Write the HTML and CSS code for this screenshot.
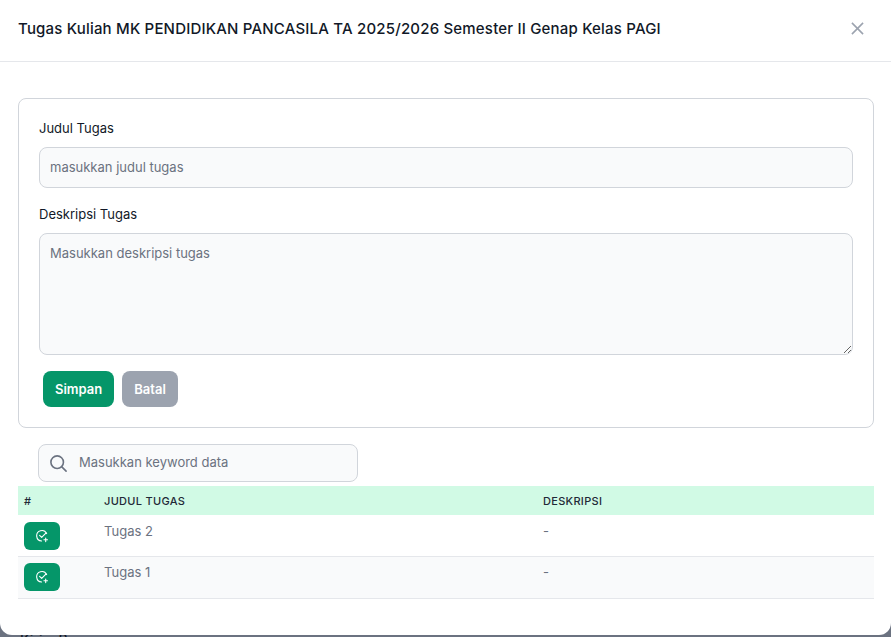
FILE: index.html
```html
<!DOCTYPE html>
<html lang="id">
<head>
    <meta charset="UTF-8">
    <title>Tugas Kuliah</title>
    <link rel="stylesheet" href="styles.css">
</head>
<body>

<div class="modal">
    <div class="modal-header">
        <h3>Tugas Kuliah MK PENDIDIKAN PANCASILA TA 2025/2026 Semester II Genap Kelas PAGI</h3>
        <svg class="close-icon" width="13" height="13" viewBox="0 0 14 14" fill="none" stroke="#9ca3af" stroke-width="1.7"><path d="M1 1l12 12M13 1L1 13"/></svg>
    </div>

    <div class="modal-body">
        <form class="task-form">
            <label class="field-label">Judul Tugas</label>
            <input class="field" type="text" placeholder="masukkan judul tugas">
            <label class="field-label label-second">Deskripsi Tugas</label>
            <textarea class="field field-area" placeholder="Masukkan deskripsi tugas"></textarea>
            <div class="form-actions">
                <button type="button" class="btn btn-save">Simpan</button>
                <button type="button" class="btn btn-cancel">Batal</button>
            </div>
        </form>

        <div class="search-box">
            <svg width="19" height="19" viewBox="0 0 20 20" fill="none" stroke="#6b7280" stroke-width="1.7"><circle cx="8.6" cy="8.6" r="6.6"/><path d="M13.5 13.5L18 18" stroke-linecap="round"/></svg>
            <input class="search-input" type="text" placeholder="Masukkan keyword data">
        </div>

        <table class="task-table">
            <thead>
                <tr>
                    <th class="col-action">#</th>
                    <th class="col-title">Judul Tugas</th>
                    <th>Deskripsi</th>
                </tr>
            </thead>
            <tbody>
                <tr>
                    <td class="cell-action"><button type="button" class="btn-row"><svg width="14" height="14" viewBox="0 0 14 14" fill="none" stroke="#fff" stroke-width="1.1" stroke-linecap="round" stroke-linejoin="round"><path d="M11.6 4.6A5.2 5.2 0 1 0 6.6 12"/><path d="M4.6 6.3l2.1 2.1 4.4-4.6"/><path d="M10.7 9v3.6M8.9 10.8h3.6"/></svg></button></td>
                    <td class="cell-text">Tugas 2</td>
                    <td class="cell-text">-</td>
                </tr>
                <tr class="row-alt">
                    <td class="cell-action"><button type="button" class="btn-row"><svg width="14" height="14" viewBox="0 0 14 14" fill="none" stroke="#fff" stroke-width="1.1" stroke-linecap="round" stroke-linejoin="round"><path d="M11.6 4.6A5.2 5.2 0 1 0 6.6 12"/><path d="M4.6 6.3l2.1 2.1 4.4-4.6"/><path d="M10.7 9v3.6M8.9 10.8h3.6"/></svg></button></td>
                    <td class="cell-text">Tugas 1</td>
                    <td class="cell-text">-</td>
                </tr>
            </tbody>
        </table>
    </div>
</div>

<div class="page-behind">Kirim Barang</div>

</body>
</html>
```

FILE: styles.css
```css
html, body {
    height: 100%;
}
body {
    font-family: 'Inter', sans-serif;
    background-color: #6b7280;
    margin: 0;
    overflow: hidden;
    color: #111827;
}
.modal {
    height: 635px;
    box-sizing: border-box;
    background-color: #fff;
    border-radius: 0 0 12px 12px;
    position: relative;
    z-index: 1;
}
.modal-header {
    height: 62px;
    box-sizing: border-box;
    display: flex;
    align-items: center;
    justify-content: space-between;
    padding: 0 27px 5px 18px;
    border-bottom: 1px solid #e5e7eb;
}
.modal-header h3 {
    margin: 0;
    font-size: 15px;
    font-weight: 500;
    letter-spacing: 0.19px;
}
.modal-body {
    padding: 36px 17px 0 18px;
}
.task-form {
    display: block;
    height: 330px;
    box-sizing: border-box;
    padding: 20px 20px 0;
    border: 1px solid #d1d5db;
    border-radius: 8px;
}
.field-label {
    display: block;
    font-size: 13px;
    line-height: 18px;
    margin-bottom: 10px;
}
.label-second {
    margin-top: 17px;
}
.field {
    display: block;
    width: 100%;
    height: 41px;
    box-sizing: border-box;
    padding: 0 10px 2px;
    font-family: 'Inter', sans-serif;
    font-size: 13px;
    color: #111827;
    background-color: #f9fafb;
    border: 1px solid #d1d5db;
    border-radius: 8px;
    outline: none;
}
.field-area {
    height: 122px;
    padding: 11px 10px;
    resize: vertical;
}
.field::placeholder,
.search-input::placeholder {
    color: #6b7280;
    opacity: 1;
}
.form-actions {
    display: flex;
    gap: 8px;
    margin: 16px 0 0 4px;
}
.btn {
    height: 36px;
    padding: 0 12px;
    border: none;
    border-radius: 8px;
    color: #fff;
    font-family: 'Inter', sans-serif;
    font-size: 13px;
    font-weight: 600;
}
.btn-save {
    background-color: #059669;
}
.btn-cancel {
    background-color: #9ca3af;
}
.search-box {
    display: flex;
    align-items: center;
    gap: 11px;
    width: 320px;
    height: 38px;
    box-sizing: border-box;
    margin: 16px 0 4px 20px;
    padding: 0 10px;
    background-color: #f9fafb;
    border: 1px solid #d1d5db;
    border-radius: 8px;
}
.search-input {
    flex: 1;
    min-width: 0;
    padding: 0 0 2px;
    border: none;
    outline: none;
    background: transparent;
    font-family: 'Inter', sans-serif;
    font-size: 13px;
}
.task-table {
    width: 100%;
    border-collapse: collapse;
    table-layout: fixed;
    font-size: 13px;
}
.task-table th {
    height: 29px;
    padding: 0 6px;
    text-align: left;
    font-size: 11px;
    font-weight: 500;
    letter-spacing: 0.3px;
    text-transform: uppercase;
    color: #1f2937;
    background-color: #d1fae5;
}
.col-action {
    width: 68px;
}
.col-title {
    width: 427px;
}
.task-table td {
    height: 41px;
    padding: 7px 6px 0;
    box-sizing: border-box;
    vertical-align: top;
    color: #6b7280;
    border-bottom: 1px solid #e5e7eb;
}
.task-table .cell-text {
    padding-top: 8px;
    letter-spacing: 0.02px;
}
.task-table .row-alt td {
    height: 42px;
    background-color: #f9fafb;
}
.task-table .row-alt .cell-action {
    padding-top: 6px;
}
.task-table .row-alt .cell-text {
    padding-top: 7px;
}
.btn-row {
    display: flex;
    align-items: center;
    justify-content: center;
    width: 36px;
    height: 28px;
    padding: 0;
    border: none;
    border-radius: 6px;
    background-color: #059669;
}
.page-behind {
    padding-left: 20px;
    margin-top: -4px;
    font-size: 14px;
    line-height: 18px;
    font-weight: 500;
    color: #111827;
}
```
